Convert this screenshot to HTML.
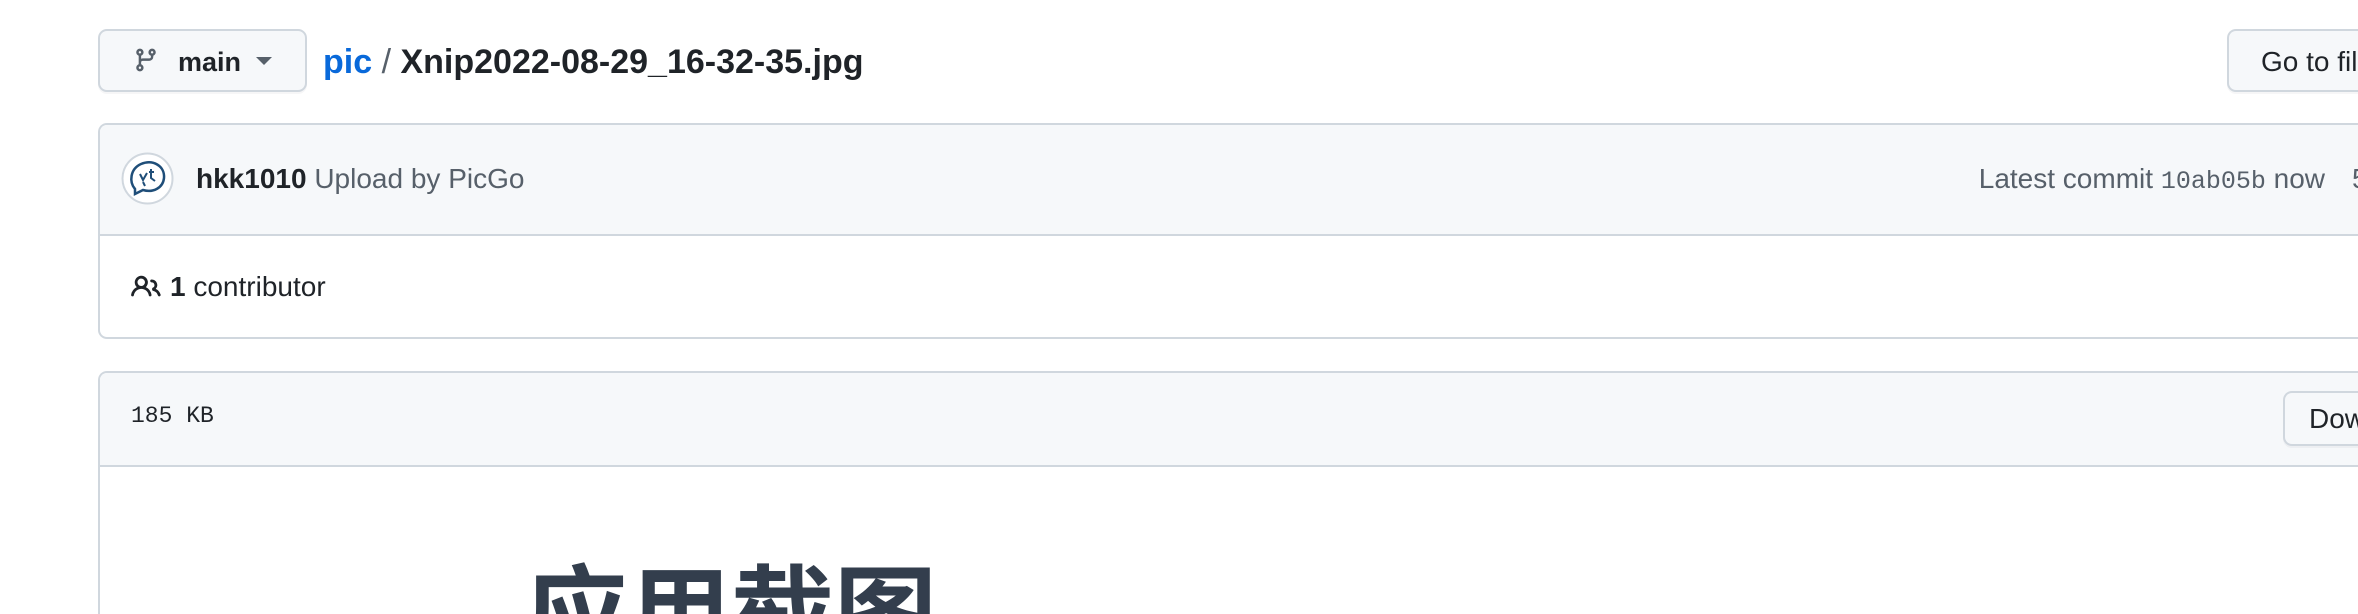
<!DOCTYPE html>
<html><head><meta charset="utf-8"><style>
html,body{margin:0;padding:0;width:2358px;height:614px;overflow:hidden;background:#fff;font-family:"Liberation Sans","Noto Sans CJK SC",sans-serif;color:#1f2328}
#wrap{position:relative;width:2358px;height:614px;overflow:hidden}
.abs{position:absolute}
.btn{position:absolute;background:#f6f8fa;border:2px solid #d0d7de;border-radius:9px;box-sizing:border-box;box-shadow:0 2px 0 rgba(31,35,40,0.04)}
.card{position:absolute;border:2px solid #d0d7de;border-radius:9px;box-sizing:border-box;overflow:hidden}
.t{position:absolute;white-space:nowrap;line-height:1}
</style></head><body><div id="wrap">

<div class="btn" style="left:98px;top:29px;width:209px;height:63px"></div>
<svg class="abs" style="left:133px;top:45px" width="26" height="30" viewBox="0 0 16 16"><path fill="#57606a" d="M9.5 3.25a2.25 2.25 0 1 1 3 2.122V6A2.5 2.5 0 0 1 10 8.5H6a1 1 0 0 0-1 1v1.128a2.251 2.251 0 1 1-1.5 0V5.372a2.25 2.25 0 1 1 1.5 0v1.836A2.493 2.493 0 0 1 6 7h4a1 1 0 0 0 1-1v-.628A2.25 2.25 0 0 1 9.5 3.25Zm-6 0a.75.75 0 1 0 1.5 0 .75.75 0 0 0-1.5 0Zm8.25-.75a.75.75 0 1 0 0 1.5.75.75 0 0 0 0-1.5ZM4.25 12a.75.75 0 1 0 0 1.5.75.75 0 0 0 0-1.5Z"/></svg>
<div class="t" style="left:178px;top:49px;font-size:27px;font-weight:bold;color:#1f2328">main</div>
<svg class="abs" style="left:256px;top:57px" width="16" height="9" viewBox="0 0 16 9"><path d="M0 0h16L8 8z" fill="#57606a"/></svg>

<div class="t" style="left:323px;top:45px;font-size:34px;font-weight:bold"><span style="color:#0969da">pic</span><span style="font-weight:normal;color:#57606a"> / </span>Xnip2022-08-29_16-32-35.jpg</div>

<div class="btn" style="left:2227px;top:29px;width:131px;height:63px;border-right:none;border-radius:9px 0 0 9px"></div>
<div class="t" style="left:2261px;top:48px;width:97px;overflow:hidden;font-size:28px;color:#1f2328">Go to file</div>

<!-- commit card -->
<div class="card" style="left:98px;top:123px;width:2260px;height:216px;border-right:none;border-radius:9px 0 0 9px">
  <div class="abs" style="left:0;top:0;right:0;height:109px;background:#f6f8fa;border-bottom:2px solid #d0d7de"></div>
</div>
<svg class="abs" style="left:121px;top:152px" width="53" height="53" viewBox="0 0 53 53"><circle cx="26.5" cy="26.5" r="25" fill="#fff" stroke="#d0d7de" stroke-width="2"/><path d="M14 37 C8 30 9 17 20 12 C32 7 44 14 43 26 C42 36 32 41 22 38 L14 42 Z" fill="none" stroke="#1f4e79" stroke-width="2.5"/><path d="M19 22 l3 6 l4-7 M28 20 l5 0 M30 17 l0 9 l4 3 M22 30 l2 4" fill="none" stroke="#1f4e79" stroke-width="2"/></svg>
<div class="t" style="left:196px;top:165px;font-size:28px"><b>hkk1010</b> <span style="color:#57606a">Upload by PicGo</span></div>
<div class="t" style="right:33px;top:165px;font-size:28px;color:#57606a">Latest commit <span style="font-family:'Liberation Mono',monospace;font-size:25px">10ab05b</span> now</div>
<div class="t" style="left:2352px;top:165px;width:6px;overflow:hidden;font-size:28px;color:#57606a">5</div>

<svg class="abs" style="left:131px;top:272px" width="30" height="30" viewBox="0 0 16 16"><path fill="#1f2328" d="M2 5.5a3.5 3.5 0 1 1 5.898 2.549 5.508 5.508 0 0 1 3.034 4.084.75.75 0 1 1-1.482.235 4 4 0 0 0-7.9 0 .75.75 0 0 1-1.482-.236A5.507 5.507 0 0 1 3.102 8.05 3.493 3.493 0 0 1 2 5.5ZM11 4a3.001 3.001 0 0 1 2.22 5.018 5.01 5.01 0 0 1 2.56 3.012.749.749 0 0 1-.885.954.752.752 0 0 1-.549-.514 3.507 3.507 0 0 0-2.522-2.372.75.75 0 0 1-.574-.73v-.352a.75.75 0 0 1 .416-.672A1.5 1.5 0 0 0 11 5.5.75.75 0 0 1 11 4Zm-5.5-.5a2 2 0 1 0-.001 3.999A2 2 0 0 0 5.5 3.5Z"/></svg>
<div class="t" style="left:170px;top:273px;font-size:28px"><b>1</b> contributor</div>

<!-- file card -->
<div class="card" style="left:98px;top:371px;width:2260px;height:243px;border-right:none;border-bottom:none;border-radius:9px 0 0 0">
  <div class="abs" style="left:0;top:0;right:0;height:92px;background:#f6f8fa;border-bottom:2px solid #d0d7de"></div>
  <div class="t" style="left:425px;top:182px;height:59px;overflow:hidden;font-size:103px;font-weight:bold;color:#333e4d;font-family:'Noto Sans CJK SC',sans-serif">应用截图</div>
</div>
<div class="t" style="left:131px;top:405px;font-size:23px;font-family:'Liberation Mono',monospace;color:#1f2328">185 KB</div>
<div class="btn" style="left:2283px;top:391px;width:75px;height:55px;border-right:none;border-radius:9px 0 0 9px"></div>
<div class="t" style="left:2309px;top:405px;width:49px;overflow:hidden;font-size:28px;color:#1f2328">Download</div>

</div></body></html>
